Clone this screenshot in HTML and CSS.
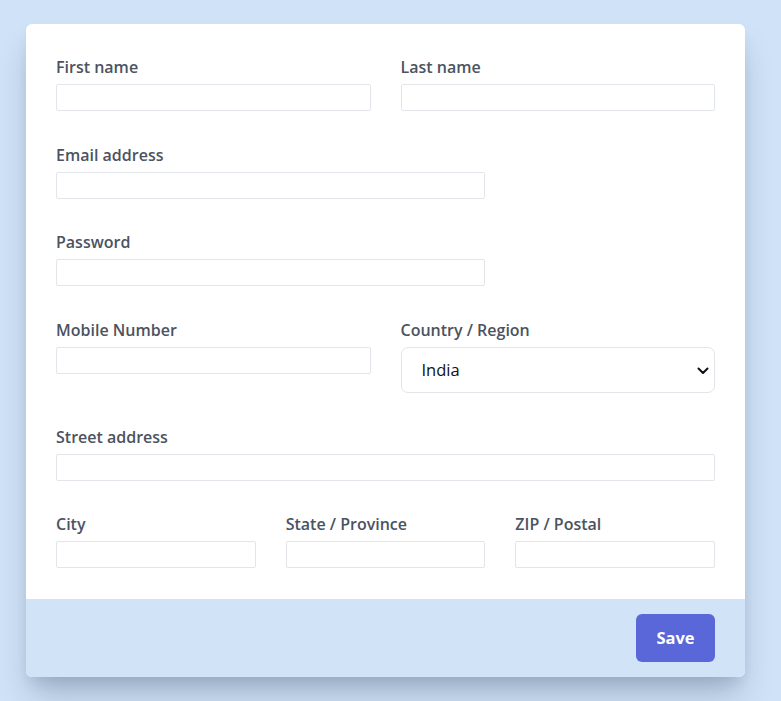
FILE: index.html
```html
<!DOCTYPE html>
<html>
<head>
<meta charset="utf-8">
<link rel="stylesheet" href="styles.css">
</head>
<body>
<form class="card">
  <div class="fields">
    <div class="field span3">
      <label class="label">First name</label>
      <input class="input" type="text">
    </div>
    <div class="field span3">
      <label class="label">Last name</label>
      <input class="input" type="text">
    </div>
    <div class="field span4">
      <label class="label">Email address</label>
      <input class="input" type="text">
    </div>
    <div class="field span4">
      <label class="label">Password</label>
      <input class="input" type="password">
    </div>
    <div class="field span3">
      <label class="label">Mobile Number</label>
      <input class="input" type="text">
    </div>
    <div class="field span3">
      <label class="label">Country / Region</label>
      <div class="select-wrap">
        <select class="select">
          <option>India</option>
        </select>
        <svg class="chevron" width="12" height="8" viewBox="0 0 12 8"><path d="M1.5 1.5 L6 6 L10.5 1.5" fill="none" stroke="#111" stroke-width="2" stroke-linecap="round" stroke-linejoin="round"/></svg>
      </div>
    </div>
    <div class="field span6">
      <label class="label">Street address</label>
      <input class="input" type="text">
    </div>
    <div class="field span2">
      <label class="label">City</label>
      <input class="input" type="text">
    </div>
    <div class="field span2">
      <label class="label">State / Province</label>
      <input class="input" type="text">
    </div>
    <div class="field span2">
      <label class="label">ZIP / Postal</label>
      <input class="input" type="text">
    </div>
  </div>
  <div class="footer">
    <button type="button" class="btn">Save</button>
  </div>
</form>
</body>
</html>
```

FILE: styles.css
```css
html, body {
  margin: 0;
  padding: 0;
}
body {
  background: #cfe2f7;
  font-family: "Open Sans", "Noto Sans", sans-serif;
  min-height: 701px;
  padding: 24px 36px 0 26px;
  box-sizing: border-box;
}
.card {
  width: 719px;
  background: #ffffff;
  border-radius: 6px;
  overflow: hidden;
  box-shadow: 0 22px 30px -6px rgba(40, 60, 90, 0.28), 0 8px 14px -4px rgba(40, 60, 90, 0.12);
}
.fields {
  display: grid;
  grid-template-columns: repeat(6, 1fr);
  column-gap: 30px;
  row-gap: 30.67px;
  padding: 30px 30px 30.7px 30px;
}
.field {
  display: flex;
  flex-direction: column;
}
.span2 { grid-column: span 2; }
.span3 { grid-column: span 3; }
.span4 { grid-column: span 4; }
.span6 { grid-column: span 6; }
.label {
  font-size: 16px;
  font-weight: 600;
  line-height: 24px;
  padding-top: 1px;
  color: #4b5361;
  margin-bottom: 5px;
}
.input {
  height: 27px;
  box-sizing: border-box;
  border: 1px solid #e2e5ea;
  border-radius: 2px;
  background: #fff;
  font-family: inherit;
  font-size: 16px;
  padding: 0 8px;
  outline: none;
}
.select-wrap {
  position: relative;
}
.select {
  appearance: none;
  -webkit-appearance: none;
  width: 100%;
  height: 46px;
  box-sizing: border-box;
  border: 1px solid #e2e5ea;
  border-radius: 7px;
  background: #fff;
  font-family: inherit;
  font-size: 16.5px;
  color: #111;
  padding: 0 20px;
  outline: none;
}
.chevron {
  position: absolute;
  right: 6px;
  top: 20px;
  pointer-events: none;
}
.footer {
  background: #d0e3f7;
  display: flex;
  justify-content: flex-end;
  padding: 15px 30px 15px;
}
.btn {
  width: 79px;
  height: 48px;
  border: none;
  border-radius: 6px;
  background: #5a67d8;
  color: #fff;
  font-family: inherit;
  font-size: 16.5px;
  font-weight: 700;
}
```
